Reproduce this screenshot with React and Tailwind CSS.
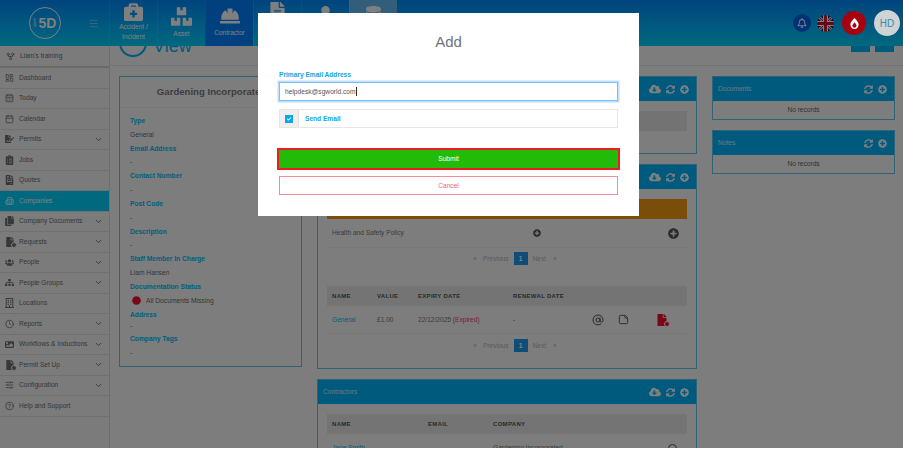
import React from 'react';
import { ChevronDown, LayoutDashboard, CalendarDays, Calendar, GitFork, Clock, CircleHelp, SlidersHorizontal, AtSign, StickyNote, Building2, Menu } from 'lucide-react';
import { FaBriefcaseMedical, FaBoxes, FaHardHat, FaFile, FaFileAlt, FaUser, FaDatabase, FaCloudDownloadAlt, FaSyncAlt, FaPlusCircle, FaRegBell, FaBurn, FaClipboardList, FaFileSignature, FaCopy, FaFileInvoice, FaUsers, FaImage, FaCheck, FaSitemap, FaRegBuilding, FaCircle } from 'react-icons/fa';

// file with a little clock badge, used by Requests, Permit Set Up and the expired row
const FileBadge = ({ size, ring }) => (
    <span className="relative inline-flex">
        <FaFile size={size} />
        <span className={`absolute -right-[2px] -bottom-[1px] w-[6px] h-[6px] rounded-full bg-current border ${ring}`} />
    </span>
);

const sideItems = [
    { label: "Dashboard", icon: <LayoutDashboard size={10} /> },
    { label: "Today", icon: <CalendarDays size={10} /> },
    { label: "Calendar", icon: <Calendar size={10} /> },
    { label: "Permits", icon: <FaFileSignature size={10} />, more: true },
    { label: "Jobs", icon: <FaClipboardList size={10} /> },
    { label: "Quotes", icon: <FaFileInvoice size={10} /> },
    { label: "Companies", icon: <Building2 size={10} />, active: true },
    { label: "Company Documents", icon: <FaCopy size={10} />, more: true },
    { label: "Requests", icon: <FileBadge size={10} ring="border-[#f6f6f6]" />, more: true },
    { label: "People", icon: <FaUsers size={11} />, more: true },
    { label: "People Groups", icon: <FaSitemap size={11} />, more: true },
    { label: "Locations", icon: <FaRegBuilding size={10} /> },
    { label: "Reports", icon: <Clock size={10} />, more: true },
    { label: "Workflows & Inductions", icon: <FaImage size={11} />, more: true },
    { label: "Permit Set Up", icon: <FileBadge size={10} ring="border-[#f6f6f6]" />, more: true },
    { label: "Configuration", icon: <SlidersHorizontal size={10} />, more: true },
    { label: "Help and Support", icon: <CircleHelp size={10} /> },
];

const details = [
    { label: "Type", value: "General" },
    { label: "Email Address", value: "-" },
    { label: "Contact Number", value: "-" },
    { label: "Post Code", value: "-" },
    { label: "Description", value: "-" },
    { label: "Staff Member In Charge", value: "Liam Hansen" },
];

const topTabs = [
    { label: ["Accident /", "Incident"], icon: <FaBriefcaseMedical size={19} />, pad: "pt-[2px]" },
    { label: ["Asset"], icon: <FaBoxes size={21} />, pad: "pt-[6px]" },
    { label: ["Contractor"], icon: <FaHardHat size={20} />, pad: "pt-[6px]", active: true },
    { label: [""], icon: <FaFileAlt size={19} />, pad: "pt-[2px]" },
    { label: [""], icon: <FaUser size={17} />, pad: "pt-[6px]" },
    { label: [""], icon: <FaDatabase size={17} />, pad: "pt-[6px]", light: true },
];

const PanelHeader = ({ title, download }) => (
    <div className="h-6 shrink-0 bg-[#00b4fc] flex items-center justify-between pl-[5px] pr-[7px] text-white text-[6.6px]">
        <span className="opacity-80">{title}</span>
        <div className="flex items-center gap-[5px]">
            {download && <FaCloudDownloadAlt size={12} />}
            <FaSyncAlt size={9} />
            <FaPlusCircle size={9} />
        </div>
    </div>
);

const Pagination = () => (
    <div className="flex items-center justify-center pl-[16px] text-[6.6px] text-[#b5b5b5]">
        <span className="mr-[6px]">«</span>
        <span className="mr-[5px]">Previous</span>
        <span className="w-[14px] h-[13px] bg-[#1a9bf0] text-white flex items-center justify-center font-bold">1</span>
        <span className="ml-[5px]">Next</span>
        <span className="ml-[7px]">»</span>
    </div>
);

const App = () => {
    return (
        <div className="relative w-[903px] h-[450px] overflow-hidden bg-white font-['Liberation_Sans',Arial,sans-serif]">
            <div className="h-[448px] overflow-hidden flex flex-col bg-[#fbfbfb]">

                {/* top bar */}
                <header className="h-[46px] shrink-0 flex bg-gradient-to-b from-[#0088fa] to-[#00d2ff] text-white">
                    <div className="w-[109px] flex items-center pl-[29px]">
                        <div className="w-[32px] h-[32px] rounded-full border border-white flex items-center justify-center gap-[1px]">
                            <span className="text-[3px] leading-[3px] w-[4px] break-all">SGW</span>
                            <span className="text-[14px] font-bold leading-none">5D</span>
                        </div>
                        <Menu size={11} strokeWidth={1.5} className="ml-[27px] opacity-60" />
                    </div>
                    {topTabs.map((tab, i) => (
                        <div key={i} className={`w-[48px] flex flex-col items-center text-[6.5px] leading-[10px] text-center border-l border-white/10 ${tab.pad} ${tab.active ? "bg-[#0080fc]" : ""} ${tab.light ? "bg-[#67bdf5]" : ""}`}>
                            {tab.icon}
                            <div className={tab.label.length === 1 ? "mt-[2px]" : "mt-[1px]"}>
                                {tab.label.map((l) => <div key={l}>{l}</div>)}
                            </div>
                        </div>
                    ))}
                    <div className="ml-auto flex items-center pr-[3px]">
                        <div className="w-[18px] h-[18px] rounded-full bg-[#0060f0] flex items-center justify-center mr-[6px]">
                            <FaRegBell size={10} />
                        </div>
                        <svg width="17" height="17" viewBox="0 0 60 60" className="rounded-full mr-[8px]">
                            <rect width="60" height="60" fill="#012169" />
                            <path d="M0 0L60 60M60 0L0 60" stroke="#fff" strokeWidth="10" />
                            <path d="M0 0L60 60M60 0L0 60" stroke="#c8102e" strokeWidth="4" />
                            <path d="M30 0V60M0 30H60" stroke="#fff" strokeWidth="18" />
                            <path d="M30 0V60M0 30H60" stroke="#c8102e" strokeWidth="10" />
                        </svg>
                        <div className="relative z-20 w-[24px] h-[24px] rounded-full bg-[#a90010] flex items-center justify-center mr-[8px]">
                            <FaBurn size={11} />
                        </div>
                        <div className="relative z-20 w-[26px] h-[26px] rounded-full bg-[#cfd3d3] text-[#3c8aae] text-[10px] flex items-center justify-center">HD</div>
                    </div>
                </header>

                <div className="flex flex-1 min-h-0">

                    {/* sidebar */}
                    <aside className="w-[110px] shrink-0 bg-[#f6f6f6] border-r border-[#dedede] text-[#707070] text-[6.6px]">
                        <div className="h-[22px] flex items-center pl-[6px] gap-[5px] border-b-2 border-[#d5d5d5]">
                            <GitFork size={9} />
                            <span>Liam's training</span>
                        </div>
                        {sideItems.map((item) => (
                            <div key={item.label} className={`h-[20.5px] flex items-center pl-[5px] pr-[6px] gap-[5px] border-b border-[#e0e0e0] ${item.active ? "bg-[#00d0ff] text-white" : ""}`}>
                                <span className="w-[9px] flex justify-center">{item.icon}</span>
                                <span className="whitespace-nowrap">{item.label}</span>
                                {item.more && <ChevronDown size={9} strokeWidth={2.5} className="ml-auto" />}
                            </div>
                        ))}
                    </aside>

                    {/* main area */}
                    <main className="flex-1 min-w-0 flex flex-col">
                        <div className="h-[20px] shrink-0 relative overflow-hidden flex border-b border-[#e4e4e4] pl-[9px] text-[#00b4fc]">
                            <div className="w-[28px] h-[28px] rounded-full border-2 border-[#00b4fc] -mt-[17px] shrink-0" />
                            <span className="text-[18px] leading-[14px] h-[14px] ml-[6px] -mt-[7px]">View</span>
                            <div className="ml-auto flex gap-[5px] pr-[9px]">
                                <div className="w-[19px] h-[6px] bg-[#00b4fc]" />
                                <div className="w-[19px] h-[6px] bg-[#00b4fc]" />
                            </div>
                        </div>

                        <div className="flex-1 min-h-0 overflow-hidden flex items-start gap-[15px] pl-[9px] pt-[10px]">

                            {/* company details */}
                            <section className="w-[183px] h-[291px] shrink-0 border border-[#5fc7ee] px-[10px] text-[6.7px] text-[#777]">
                                <h2 className="h-[31px] flex items-center justify-center whitespace-nowrap text-[#7d7d7d] text-[9.6px] font-bold border-b border-[#eee] -mx-[10px] pl-[2px]">Gardening Incorporated</h2>
                                <div className="pt-[6px]">
                                    {details.map((d) => (
                                        <div key={d.label}>
                                            <div className="h-[13.85px] flex items-center text-[#00c0f8] font-bold">{d.label}</div>
                                            <div className="h-[13.85px] flex items-center text-[#6c6c6c]">{d.value}</div>
                                        </div>
                                    ))}
                                    <div className="h-[13.85px] flex items-center text-[#00c0f8] font-bold">Documentation Status</div>
                                    <div className="h-[13.85px] flex items-center gap-[5px] pl-[2px] text-[#6c6c6c]">
                                        <FaCircle size={9} className="text-[#f0122c]" />
                                        <span>All Documents Missing</span>
                                    </div>
                                    <div className="h-[13.85px] flex items-center text-[#00c0f8] font-bold">Address</div>
                                    <div className="h-[8px] flex items-center text-[#6c6c6c]">-</div>
                                    <div className="h-[14px] flex items-center text-[#00c0f8] font-bold mt-[2px]">Company Tags</div>
                                    <div className="h-[14px] flex items-center text-[#6c6c6c]">-</div>
                                </div>
                            </section>

                            {/* middle column */}
                            <div className="w-[380px] shrink-0 flex flex-col gap-[10px]">
                                <section className="h-[78px] border border-[#5fc7ee]">
                                    <PanelHeader download />
                                    <div className="mx-[9px] mt-[10px] h-[20px] bg-[#e6e6e6]" />
                                </section>

                                <section className="h-[205px] border border-[#5fc7ee] text-[6.6px] text-[#777]">
                                    <PanelHeader download />
                                    <div className="px-[9px] pt-[10px]">
                                        <div className="h-[20px] bg-[#f59a12]" />
                                        <div className="h-[29px] flex items-center border-b border-[#eee]">
                                            <span className="pl-[5px]">Health and Safety Policy</span>
                                            <FaPlusCircle size={8} className="text-[#555] ml-[129px]" />
                                            <FaPlusCircle size={11} className="text-[#555] ml-auto mr-[8px]" />
                                        </div>
                                        <div className="mt-[4px]"><Pagination /></div>

                                        <div className="mt-[21px] h-[20px] bg-[#e8e8e8] flex items-center font-bold text-[6px] text-[#555] tracking-[0.3px]">
                                            <span className="w-[50px] pl-[5px]">NAME</span>
                                            <span className="w-[41px]">VALUE</span>
                                            <span className="w-[95px]">EXPIRY DATE</span>
                                            <span>RENEWAL DATE</span>
                                        </div>
                                        <div className="h-[28px] flex items-center border-b border-[#eee]">
                                            <span className="w-[50px] pl-[5px] text-[#00c0f8]">General</span>
                                            <span className="w-[41px]">£1.00</span>
                                            <span className="w-[95px] whitespace-nowrap">22/12/2025 <span className="text-[#f04060]">(Expired)</span></span>
                                            <span className="w-[79px]">-</span>
                                            <AtSign size={12} className="text-[#555]" />
                                            <StickyNote size={11} className="text-[#555] ml-[14px]" />
                                            <span className="text-[#f01030] ml-[27px] flex"><FileBadge size={12} ring="border-[#fbfbfb]" /></span>
                                        </div>
                                        <div className="mt-[5px]"><Pagination /></div>
                                    </div>
                                </section>

                                <section className="h-[200px] border border-[#5fc7ee] text-[6.6px] text-[#777]">
                                    <PanelHeader title="Contractors" download />
                                    <div className="px-[9px] pt-[10px]">
                                        <div className="h-[20px] bg-[#e8e8e8] flex items-center font-bold text-[6px] text-[#555] tracking-[0.3px]">
                                            <span className="w-[101px] pl-[5px]">NAME</span>
                                            <span className="w-[65px]">EMAIL</span>
                                            <span>COMPANY</span>
                                        </div>
                                        <div className="h-[28px] flex items-center">
                                            <span className="w-[101px] pl-[5px] text-[#00c0f8]">Jane Smith</span>
                                            <span className="w-[65px]">-</span>
                                            <span>Gardening Incorporated</span>
                                            <span className="ml-auto mr-[10px] w-[9px] h-[9px] rounded-full border border-[#555]" />
                                        </div>
                                    </div>
                                </section>
                            </div>

                            {/* right column */}
                            <div className="w-[183px] shrink-0 flex flex-col gap-[10px] text-[6.6px] text-[#666]">
                                {["Documents", "Notes"].map((title) => (
                                    <section key={title} className="h-[44px] border border-[#5fc7ee]">
                                        <PanelHeader title={title} />
                                        <div className="h-[18px] flex items-center justify-center">No records</div>
                                    </section>
                                ))}
                            </div>
                        </div>
                    </main>
                </div>
            </div>

            {/* backdrop */}
            <div className="absolute inset-x-0 top-0 h-[448px] z-10 bg-[rgba(0,0,0,0.5)]" />

            {/* modal */}
            <div className="absolute z-30 left-[258px] top-[13px] w-[381px] h-[203px] bg-white px-[21px]">
                <h1 className="pt-[20px] h-[52px] text-center text-[15px] leading-[18px] text-[#6c757d]">Add</h1>
                <label className="h-[17px] pt-[5px] flex text-[6.6px] font-bold text-[#0ea5e9]">Primary Email Address</label>
                <div className="h-[19px] border border-[#80bdff] shadow-[0_0_0_1.5px_#bfdeff] flex items-center pl-[5px] text-[6.65px] text-[#555]">
                    helpdesk@sgworld.com<span className="w-px h-[9px] bg-[#333]" />
                </div>
                <div className="mt-[8px] h-[19px] border border-[#e6e6e6] flex items-center">
                    <div className="w-[19px] h-full bg-[#f0f0f0] border-r border-[#e0e0e0] flex items-center justify-center">
                        <span className="w-[8px] h-[8px] bg-[#0ea5e9] flex items-center justify-center">
                            <FaCheck size={4} className="text-white" />
                        </span>
                    </div>
                    <span className="pl-[6px] text-[6.6px] font-bold text-[#0ea5e9]">Send Email</span>
                </div>
                <button className="block mt-[20px] -mx-[2px] w-[343px] h-[22px] border-[2px] border-[#ed1c24] bg-[#22bb0a] text-white text-[6.6px]">Submit</button>
                <button className="block mt-[6px] w-[339px] h-[19px] border border-[#f58a9a] bg-white text-[#f0657a] text-[6.6px]">Cancel</button>
            </div>
        </div>
    )
}

export default App;
